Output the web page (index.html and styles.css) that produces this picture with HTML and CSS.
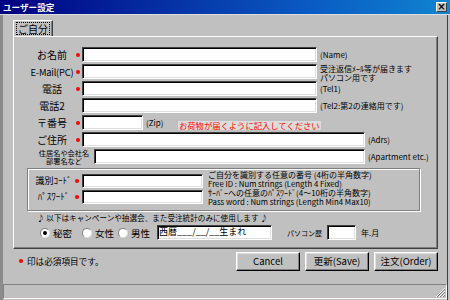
FILE: index.html
```html
<html lang="ja">
<head>
    <meta charset="UTF-8">
    <title>ユーザー設定</title>
    <link rel="stylesheet" href="styles.css">
</head>
<body>

    <div class="titlebar">
        <span class="title">ユーザー設定</span>
        <span class="close">&#215;</span>
    </div>

    <div class="window">
        <div class="tabs">
            <div class="tab"><span class="tab-label">ご自分</span></div>
        </div>

        <div class="panel">

            <div class="row">
                <span class="lbl">お名前</span><span class="req"></span>
                <span class="field w-long"></span>
                <span class="note">(Name)</span>
            </div>

            <div class="row r-mail">
                <span class="lbl mail">E-Mail(PC)</span><span class="req"></span>
                <span class="field w-long"></span>
                <span class="note two">受注返信ﾒｰﾙ等が届きます<br>パソコン用です</span>
            </div>

            <div class="row">
                <span class="lbl">電話</span><span class="req"></span>
                <span class="field w-long"></span>
                <span class="note">(Tel1)</span>
            </div>

            <div class="row r-tel2">
                <span class="lbl">電話2</span><span class="req off"></span>
                <span class="field w-long"></span>
                <span class="note">(Tel2:第2の連絡用です)</span>
            </div>

            <div class="row">
                <span class="lbl">〒番号</span><span class="req"></span>
                <span class="field w-zip"></span>
                <span class="note zip">(Zip)</span>
                <span class="hint">お荷物が届くように記入してください</span>
            </div>

            <div class="row">
                <span class="lbl">ご住所</span><span class="req"></span>
                <span class="field w-adrs"></span>
                <span class="note">(Adrs)</span>
            </div>

            <div class="row r-apt">
                <span class="lbl apt">住居名や会社名<br>部署名など</span>
                <span class="field w-apt"></span>
                <span class="note">(Apartment etc.)</span>
            </div>

            <div class="group">
                <div class="grow">
                    <span class="glbl">識別ｺｰﾄﾞ</span><span class="req"></span>
                    <span class="field w-code"></span>
                </div>
                <div class="grow">
                    <span class="glbl">ﾊﾟｽﾜｰﾄﾞ</span><span class="req"></span>
                    <span class="field w-code"></span>
                </div>
                <div class="gnotes">
                    <div class="jp">ご自分を識別する任意の番号 (4桁の半角数字)</div>
                    <div class="en">Free ID : Num strings (Length 4 Fixed)</div>
                    <div class="jp">ｻｰﾊﾞｰへの任意のﾊﾟｽﾜｰﾄﾞ(4～10桁の半角数字)</div>
                    <div class="en">Pass word : Num strings (Length Min4 Max10)</div>
                </div>
            </div>

            <div class="campaign">♪ 以下はキャンペーンや抽選会、また受注統計のみに使用します ♪</div>

            <div class="extra">
                <span class="radio on"></span><span class="rtext">秘密</span>
                <span class="radio"></span><span class="rtext r2">女性</span>
                <span class="radio"></span><span class="rtext r3">男性</span>
                <span class="field w-birth">西暦___/__/__生まれ</span>
                <span class="pc">パソコン歴</span>
                <span class="field w-pc"></span>
                <span class="ym">年.月</span>
            </div>
        </div>

        <div class="footer">
            <span class="req"></span><span class="must">印は必須項目です。</span>
            <div class="buttons">
                <span class="btn">Cancel</span>
                <span class="btn">更新(Save)</span>
                <span class="btn">注文(Order)</span>
            </div>
        </div>

        <div class="statusbar">
            <svg class="grip" width="11" height="11" viewBox="0 0 11 11">
                <path d="M10 1 L1 10 M10 4 L4 10 M10 7 L7 10" stroke="#fff" stroke-width="1"/>
                <path d="M10 2 L2 10 M10 5 L5 10 M10 8 L8 10" stroke="#808080" stroke-width="1"/>
            </svg>
        </div>
    </div>

</body>
</html>
```

FILE: styles.css
```css
body{
    margin: 0;
    width: 450px;
    height: 300px;
    overflow: hidden;
    background: #c0c0c0;
    font-family: "Noto Sans CJK JP", sans-serif;
    font-size: 10px;
    color: #000;
}

/* title bar */
.titlebar{
    height: 14px;
    display: flex;
    align-items: center;
    justify-content: space-between;
    padding: 0 3px 0 3px;
    border-bottom: 1px solid #dfdfdf;
    background: linear-gradient(to right, #000080, #0a5cc4 70%, #1084d0);
}
.titlebar .title{
    color: #fff;
    font-size: 8.6px;
    font-weight: bold;
    line-height: 14px;
}
.titlebar .close{
    width: 9px;
    height: 8px;
    background: #c0c0c0;
    border: 1px solid;
    border-color: #fff #404040 #404040 #fff;
    font-size: 10px;
    font-weight: bold;
    line-height: 8px;
    text-align: center;
    font-family: "DejaVu Sans", sans-serif;
}

.window{
    height: 285px;
    border-left: 3px solid #8c8c8c;
    border-right: 1px solid #404040;
    border-bottom: 1px solid #404040;
    margin-right: 2px;
    display: flex;
    flex-direction: column;
}

/* tab */
.tabs{
    padding: 5px 0 0 10px;
    display: flex;
}
.tab{
    width: 38px;
    height: 15px;
    border: 1px solid;
    border-color: #fff #404040 transparent #fff;
    border-bottom: none;
    box-shadow: inset -1px 0 #808080;
    display: flex;
    align-items: center;
    justify-content: center;
}
.tab-label{
    display: block;
    height: 11px;
    font-size: 10px;
    line-height: 11px;
    padding: 0 1px;
    outline: 1px dotted #000;
}

/* tab page */
.panel{
    width: 425px;
    height: 213px;
    margin-left: 10px;
    border: 1px solid;
    border-color: #fff #404040 #404040 #fff;
    box-shadow: inset -1px -1px #808080;
    padding-top: 10px;
    box-sizing: border-box;
}

.row{
    display: flex;
    align-items: center;
    height: 15px;
    margin-bottom: 2px;
    padding-left: 14px;
}
.r-mail, .r-tel2{margin-top: 1px;}
.r-apt{padding-left: 22px; margin-top: 1px;}

.lbl{
    width: 48px;
    text-align: center;
    white-space: nowrap;
    font-size: 10px;
    line-height: 12px;
}
.lbl.mail{font-size: 9.3px; letter-spacing: -0.2px;}
.lbl.apt{
    width: 56px;
    font-size: 7.2px;
    line-height: 8px;
}
.req{
    width: 4px;
    height: 4px;
    border-radius: 50%;
    background: #ff0000;
    flex: none;
}
.req.off{background: none;}

.field{
    height: 15px;
    box-sizing: border-box;
    background: #fff;
    border: 1px solid;
    border-color: #404040 #fff #fff #404040;
    box-shadow: inset 1px 1px #000, inset -1px -1px #dfdfdf;
    flex: none;
}
.w-long{width: 235px; margin-left: 2px;}
.w-zip{width: 61px; margin-left: 2px;}
.w-adrs{width: 283px; margin-left: 2px;}
.w-apt{width: 271px; margin-left: 2px;}
.w-code{width: 121px; height: 14px; margin-left: 3px;}

.note{
    margin-left: 3px;
    font-size: 8px;
    white-space: nowrap;
}
.note.two{
    font-size: 8px;
    line-height: 9px;
    margin-top: 2px;
}
.note.zip{width: 32px;}
.hint{
    margin-top: 5px;
    height: 9px;
    line-height: 9px;
    padding: 0 1px;
    background: #dcdcdc;
    color: #ff0000;
    font-size: 8.3px;
    white-space: nowrap;
}

/* ID / password group */
.group{
    position: relative;
    width: 393px;
    height: 43px;
    margin: 4px 0 0 13px;
    border: 1px solid #808080;
    box-shadow: inset 1px 1px #fff, 1px 1px #fff;
    padding-top: 5px;
    box-sizing: border-box;
}
.grow{
    display: flex;
    align-items: center;
    height: 14px;
    margin-bottom: 2px;
    padding-left: 4px;
}
.glbl{
    width: 43px;
    text-align: center;
    font-size: 9px;
    line-height: 12px;
    white-space: nowrap;
}
.gnotes{
    position: absolute;
    left: 180px;
    top: 1px;
    font-size: 8px;
    line-height: 9px;
    white-space: nowrap;
}
.gnotes .en{font-size: 7.8px;}

.campaign{
    margin: 2px 0 0 23px;
    font-size: 7.6px;
    line-height: 10px;
    white-space: nowrap;
}

.extra{
    display: flex;
    align-items: center;
    height: 15px;
    margin: 2px 0 0 26px;
}
.radio{
    width: 10px;
    height: 10px;
    border-radius: 50%;
    box-sizing: border-box;
    background: #fff;
    border: 1px solid;
    border-color: #808080 #dfdfdf #dfdfdf #808080;
    position: relative;
    flex: none;
}
.radio.on::after{
    content: "";
    position: absolute;
    left: 2px;
    top: 2px;
    width: 4px;
    height: 4px;
    border-radius: 50%;
    background: #000;
}
.rtext{
    margin: 0 10px 0 3px;
    font-size: 9.5px;
}
.rtext.r2{margin-right: 4px;}
.rtext.r3{margin-right: 7px;}
.w-birth{
    width: 115px;
    font-size: 9px;
    line-height: 12px;
    padding-left: 1px;
    white-space: nowrap;
}
.pc{
    margin-left: 15px;
    width: 40px;
    font-size: 7px;
    white-space: nowrap;
}
.w-pc{width: 29px;}
.ym{margin-left: 5px; font-size: 8px;}

/* footer */
.footer{
    display: flex;
    align-items: center;
    height: 20px;
    margin-top: 2px;
    padding-left: 16px;
}
.footer .req{margin-right: 4px;}
.must{font-size: 8.6px;}
.buttons{
    margin-left: auto;
    margin-right: 9px;
    display: flex;
    gap: 5px;
}
.btn{
    width: 64px;
    height: 19px;
    box-sizing: border-box;
    border: 1px solid;
    border-color: #fff #000 #000 #fff;
    box-shadow: inset -1px -1px #808080, inset 1px 1px #dfdfdf;
    display: flex;
    align-items: center;
    justify-content: center;
    font-size: 9.5px;
}

.statusbar{
    height: 13px;
    margin: auto 0 1px 0;
    border: 1px solid;
    border-color: #808080 #fff #fff #808080;
    position: relative;
}
.grip{
    position: absolute;
    right: 0;
    bottom: 0;
}
```
